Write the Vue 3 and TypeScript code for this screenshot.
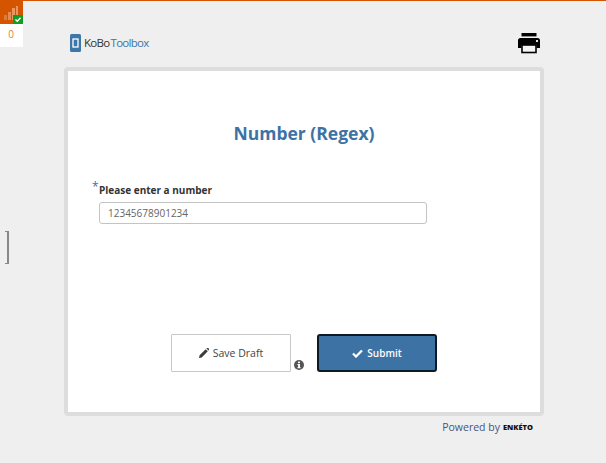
<script setup lang="ts">
const title: string = 'Number (Regex)'
</script>

<template>
  <div class="page">
    <aside class="queue">
      <div class="queue-icon">
        <svg width="23" height="24" viewBox="0 0 23 24">
          <rect x="4" y="14" width="3" height="5" fill="#e07a3c" />
          <rect x="8" y="11" width="3" height="8" fill="#e58a52" />
          <rect x="12" y="7" width="3" height="12" fill="#e99560" />
          <rect x="16" y="5" width="2" height="9" fill="#e99560" />
        </svg>
        <span class="check">
          <svg width="11" height="9" viewBox="0 0 11 9"><path d="M2 4.500 4.500 7 9 2" fill="none" stroke="#fff" stroke-width="2" /></svg>
        </span>
      </div>
      <div class="count">0</div>
    </aside>
    <span class="bracket"></span>

    <main class="shell">
      <header class="top">
        <div class="logo">
          <svg width="11" height="18" viewBox="0 0 11 18">
            <rect width="11" height="18" rx="1.500" fill="#3d76a8" />
            <rect x="3" y="5" width="5" height="8" fill="none" stroke="#fff" stroke-width="1.300" />
          </svg>
          <span class="kobo">KoBo</span><span class="toolbox">Toolbox</span>
        </div>
        <svg class="printer" width="22" height="22" viewBox="0 0 22 22">
          <rect x="3.500" y="0" width="15" height="3.400" fill="#000" />
          <path d="M2.500 5h17A2.500 2.500 0 0 1 22 7.500V15h-3.500v-3h-15v3H0V7.500A2.500 2.500 0 0 1 2.500 5Z" fill="#000" />
          <rect x="18" y="7" width="2" height="2" fill="#ddd" />
          <rect x="4" y="12" width="14" height="7.500" fill="#f4f4f4" stroke="#000" stroke-width="1.600" />
        </svg>
      </header>

      <section class="card">
        <h1>{{ title }}</h1>
        <div class="question">
          <div class="label"><span class="req">*</span><span>Please enter a number</span></div>
          <input class="answer" type="text" value="12345678901234" />
        </div>
        <div class="actions">
          <button class="btn draft">
            <svg width="10" height="10" viewBox="0 0 10 10"><path d="M0 10 .6 7.300 6.700 1.200 8.800 3.300 2.700 9.400ZM7.400.5 8 0a1 1 0 0 1 1.200 0L10 .8a1 1 0 0 1 0 1.200l-.5.6Z" fill="#3c3c3c" /></svg>
            Save Draft
          </button>
          <svg class="info" width="10" height="10" viewBox="0 0 10 10">
            <circle cx="5" cy="5" r="5" fill="#555" />
            <rect x="4" y="1.600" width="2" height="1.500" fill="#fff" />
            <path d="M3.400 4h2.600v3.300h.7v1H3.400v-1h.7V5h-.7Z" fill="#fff" />
          </svg>
          <button class="btn submit">
            <svg width="11" height="9" viewBox="0 0 11 9"><path d="M1 4.500 4 7.500 10 1.500" fill="none" stroke="#fff" stroke-width="2.300" /></svg>
            Submit
          </button>
        </div>
      </section>

      <footer class="powered">
        <span>Powered by</span>
        <span class="enketo">ENKÉTO</span>
      </footer>
    </main>
  </div>
</template>

<style>
html, body { margin: 0; background: #efefef; }
</style>

<style scoped>
.page {
  position: relative;
  height: 463px;
  box-sizing: border-box;
  border-top: 1px solid #d55400;
  background: #efefef;
  font-family: "Open Sans", "Liberation Sans", sans-serif;
  overflow: hidden;
}
.queue { position: absolute; left: 0; top: 0; width: 23px; }
.queue-icon { position: relative; height: 23px; background: #d55400; }
.queue-icon > svg { display: block; }
.check {
  position: absolute; right: 0; bottom: 0; width: 10px; height: 9px;
  background: #0f9d24; display: flex; align-items: center; justify-content: center; overflow: hidden;
}
.check svg { width: 8px; height: 7px; }
.count {
  height: 23px; background: #fff; color: #d8863e;
  font-size: 10px; line-height: 21px; text-align: center; padding-right: 1px; box-sizing: border-box;
}
.bracket {
  position: absolute; left: 5px; top: 230px; width: 4px; height: 33px;
  box-sizing: border-box; border: 1px solid #888; border-left: 0; border-right-width: 2px;
}
.shell { width: 480px; margin-left: 64px; }
.top {
  height: 66px; display: flex; align-items: flex-start; justify-content: space-between;
  padding: 32px 4px 0 6px; box-sizing: border-box;
}
.logo { display: flex; align-items: center; font-size: 11.500px; letter-spacing: -0.7px; line-height: 18px; margin-top: 1px; }
.logo svg { margin-right: 3px; }
.kobo { color: #333; }
.toolbox { color: #3d76a8; margin-left: 1px; }
.card {
  height: 349px; box-sizing: border-box; background: #fff;
  border: 4px solid #dddddd; border-radius: 4px;
  display: flex; flex-direction: column;
}
h1 {
  margin: 49px 0 0; text-align: center; color: #3d72a5;
  font-size: 17.500px; font-weight: 700; line-height: 26px;
}
.question { margin: 37px 0 0 24px; }
.label {
  display: flex; align-items: flex-start; color: #333; font-size: 10px; font-weight: 700; line-height: 14px;
}
.req { width: 7px; margin-top: -3px; color: #3d72a5; font-size: 12px; font-weight: 400; }
.answer {
  display: block; box-sizing: border-box; margin: 5px 0 0 7px; width: 328px; height: 22px;
  padding: 0 8px; border: 1px solid #c4c4c4; border-radius: 3px; background: #fff;
  color: #666; font-family: inherit; font-size: 10px;
}
.actions { display: flex; align-items: flex-start; margin: 110px 0 0 103px; }
.btn {
  box-sizing: border-box; height: 38px; display: flex; align-items: center; justify-content: center; gap: 4px;
  font-family: inherit; font-size: 10px; padding: 0;
}
.draft { width: 120px; background: #fff; color: #444; border: 1px solid #c8c8c8; border-radius: 1px; font-size: 10.500px; }
.info { margin: 26px 0 0 3px; }
.submit {
  width: 120px; margin-left: 13px; background: #3d72a5; color: #fff; font-weight: 600;
  border: 2px solid #0d1a26; border-radius: 3px;
}
.powered {
  display: flex; justify-content: flex-end; align-items: center; gap: 3px;
  padding: 3px 11px 0 0; color: #45557a; font-size: 10.500px; line-height: 16px;
}
.enketo { color: #111; font-weight: 800; font-size: 7.500px; letter-spacing: 0; }
</style>
